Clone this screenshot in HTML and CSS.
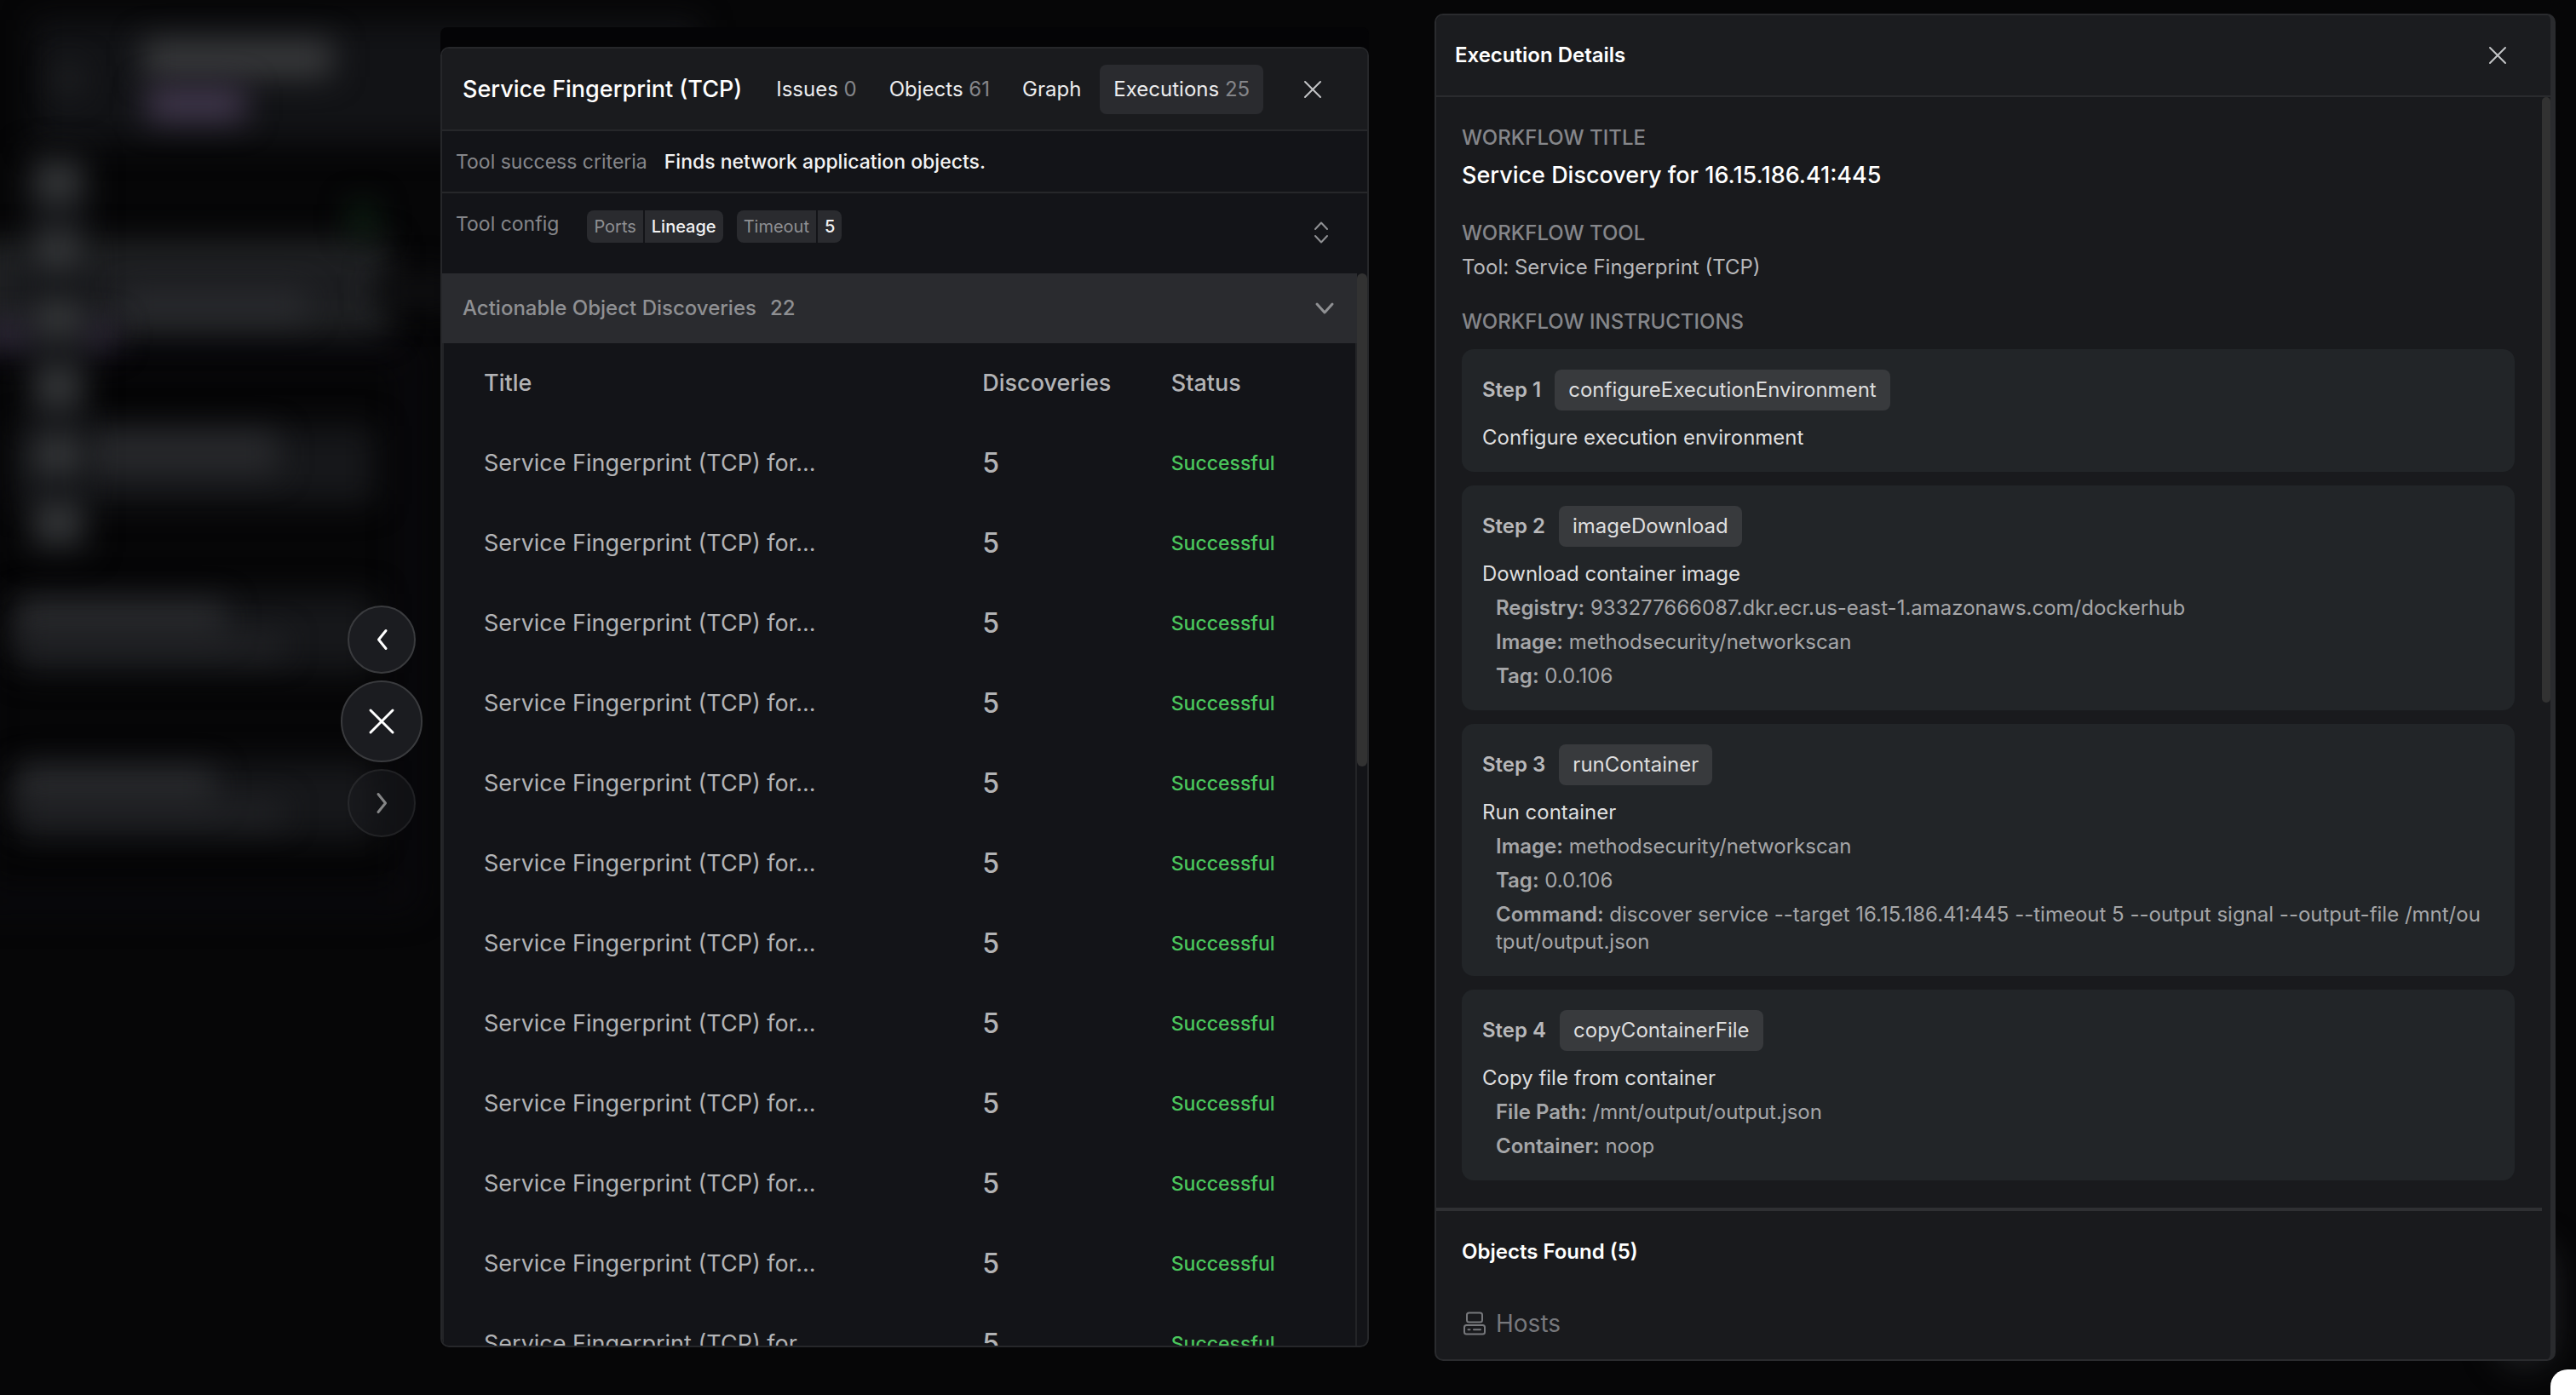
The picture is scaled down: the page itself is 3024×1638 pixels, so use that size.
FILE: index.html
```html
<!DOCTYPE html>
<html lang="en">
<head>
<meta charset="utf-8">
<meta name="viewport" content="width=device-width, initial-scale=1">
<title>Service Fingerprint (TCP)</title>
<link rel="stylesheet" href="styles.css">
</head>
<body>
<div class="backdrop" aria-hidden="true">
  <div class="region"></div>
  <div class="blob topbar"></div>
  <div class="blob topbar-title"></div>
  <div class="blob topbar-tag"></div>
  <div class="blob topbar-back"></div>
  <div class="blob node node-a"></div>
  <div class="blob node-a-text"></div>
  <div class="blob node-a-link"></div>
  <div class="blob node-a-dot"></div>
  <div class="blob node-a-tag"></div>
  <div class="blob node node-b"></div>
  <div class="blob node-b-text"></div>
  <div class="blob node node-c"></div>
  <div class="blob node-c-text"></div>
  <div class="blob node-c-sub"></div>
  <div class="blob node node-d"></div>
  <div class="blob node-d-text"></div>
  <div class="blob node-d-sub"></div>
  <div class="rail"><i></i><i></i><i></i><i></i><i></i><i></i></div>
  <div class="glow"></div>
</div>

<main class="stage">
  <nav class="pager" aria-label="Dialog navigation">
    <button class="round" type="button" aria-label="Previous"><svg width="32" height="32" viewBox="0 0 32 32"><path d="M21 5.500 12.500 16 21 26.500"/></svg></button>
    <button class="round round-lg" type="button" aria-label="Close dialog"><svg width="32" height="32" viewBox="0 0 32 32"><path d="M3 3 29 29M29 3 3 29"/></svg></button>
    <button class="round" type="button" aria-label="Next" disabled><svg width="32" height="32" viewBox="0 0 32 32"><path d="M12 5.500 20.500 16 12 26.500"/></svg></button>
  </nav>

  <div class="tool-stack">
  <section class="panel tool">
    <header class="tool-head">
      <h1 class="tool-title">Service Fingerprint (TCP)</h1>
      <div class="tabs">
        <button class="tab" type="button">Issues <span>0</span></button>
        <button class="tab" type="button">Objects <span>61</span></button>
        <button class="tab" type="button">Graph</button>
        <button class="tab active" type="button">Executions <span>25</span></button>
      </div>
      <button class="icon-btn tool-close" type="button" aria-label="Close"><svg width="24" height="24" viewBox="0 0 24 24"><path d="M3 3 21 21M21 3 3 21"/></svg></button>
    </header>
    <div class="criteria"><span class="muted">Tool success criteria</span><span class="strong">Finds network application objects.</span></div>
    <div class="config">
      <span class="muted">Tool config</span>
      <div class="chips">
        <div class="chip"><span>Ports</span><b>Lineage</b></div>
        <div class="chip"><span>Timeout</span><b>5</b></div>
      </div>
      <button class="icon-btn dim" type="button" aria-label="Expand config"><svg width="24" height="28" viewBox="0 0 24 28"><path d="M5 10 12 2.500 19 10M5 18 12 25.500 19 18"/></svg></button>
    </div>
    <div class="scroller">
      <div class="scroll-body">
        <button class="accordion" type="button"><span>Actionable Object Discoveries</span><span class="count">22</span><svg class="caret" width="24" height="24" viewBox="0 0 24 24"><path d="M3 7 12 17 21 7"/></svg></button>
        <table class="runs">
          <thead><tr><th class="c-title">Title</th><th class="c-disc">Discoveries</th><th>Status</th></tr></thead>
          <tbody>
            <tr><td>Service Fingerprint (TCP) for...</td><td class="num">5</td><td class="ok">Successful</td></tr>
            <tr><td>Service Fingerprint (TCP) for...</td><td class="num">5</td><td class="ok">Successful</td></tr>
            <tr><td>Service Fingerprint (TCP) for...</td><td class="num">5</td><td class="ok">Successful</td></tr>
            <tr><td>Service Fingerprint (TCP) for...</td><td class="num">5</td><td class="ok">Successful</td></tr>
            <tr><td>Service Fingerprint (TCP) for...</td><td class="num">5</td><td class="ok">Successful</td></tr>
            <tr><td>Service Fingerprint (TCP) for...</td><td class="num">5</td><td class="ok">Successful</td></tr>
            <tr><td>Service Fingerprint (TCP) for...</td><td class="num">5</td><td class="ok">Successful</td></tr>
            <tr><td>Service Fingerprint (TCP) for...</td><td class="num">5</td><td class="ok">Successful</td></tr>
            <tr><td>Service Fingerprint (TCP) for...</td><td class="num">5</td><td class="ok">Successful</td></tr>
            <tr><td>Service Fingerprint (TCP) for...</td><td class="num">5</td><td class="ok">Successful</td></tr>
            <tr><td>Service Fingerprint (TCP) for...</td><td class="num">5</td><td class="ok">Successful</td></tr>
            <tr><td>Service Fingerprint (TCP) for...</td><td class="num">5</td><td class="ok">Successful</td></tr>
          </tbody>
        </table>
      </div>
      <div class="track"><div class="thumb thumb-runs"></div></div>
    </div>
  </section>
  </div>

  <section class="panel details">
    <header class="details-head">
      <h2>Execution Details</h2>
      <button class="icon-btn" type="button" aria-label="Close details"><svg width="24" height="24" viewBox="0 0 24 24"><path d="M3 3 21 21M21 3 3 21"/></svg></button>
    </header>
    <div class="scroller">
      <div class="scroll-body">
        <div class="workflow">
          <div class="field">
            <h3>WORKFLOW TITLE</h3>
            <p class="wf-title">Service Discovery for 16.15.186.41:445</p>
          </div>
          <div class="field">
            <h3>WORKFLOW TOOL</h3>
            <p class="wf-tool">Tool: Service Fingerprint (TCP)</p>
          </div>
          <div class="field steps">
            <h3>WORKFLOW INSTRUCTIONS</h3>
            <article class="step">
              <div class="step-head"><span>Step 1</span><code>configureExecutionEnvironment</code></div>
              <p class="desc">Configure execution environment</p>
            </article>
            <article class="step">
              <div class="step-head"><span>Step 2</span><code>imageDownload</code></div>
              <p class="desc">Download container image</p>
              <p class="param"><b>Registry:</b> 933277666087.dkr.ecr.us-east-1.amazonaws.com/dockerhub</p>
              <p class="param"><b>Image:</b> methodsecurity/networkscan</p>
              <p class="param"><b>Tag:</b> 0.0.106</p>
            </article>
            <article class="step">
              <div class="step-head"><span>Step 3</span><code>runContainer</code></div>
              <p class="desc">Run container</p>
              <p class="param"><b>Image:</b> methodsecurity/networkscan</p>
              <p class="param"><b>Tag:</b> 0.0.106</p>
              <p class="param cmd"><b>Command:</b> discover service --target 16.15.186.41:445 --timeout 5 --output signal --output-file /mnt/output/output.json</p>
            </article>
            <article class="step">
              <div class="step-head"><span>Step 4</span><code>copyContainerFile</code></div>
              <p class="desc">Copy file from container</p>
              <p class="param"><b>File Path:</b> /mnt/output/output.json</p>
              <p class="param"><b>Container:</b> noop</p>
            </article>
          </div>
        </div>
        <div class="found">
          <h3 class="found-title">Objects Found (5)</h3>
          <div class="hosts"><svg width="28" height="28" viewBox="0 0 28 28"><rect x="6" y="1.500" width="18" height="11" rx="2.500"/><rect x="3" y="16" width="24" height="10.500" rx="2.500"/><path d="M7.500 21.250h2M14 21.250h8"/></svg><span>Hosts</span></div>
        </div>
      </div>
      <div class="track"><div class="thumb thumb-details"></div></div>
    </div>
  </section>
</main>
<div class="corner" aria-hidden="true"></div>
</body>
</html>
```
FILE: styles.css
```css
* { box-sizing: border-box; }
body {
  margin: 0;
  height: 100vh;
  overflow: hidden;
  background: #060607;
  color: #fff;
  font-family: Inter, "Liberation Sans", sans-serif;
  font-size: 24px;
  line-height: 32px;
}
h1, h2, h3, p { margin: 0; font: inherit; }
button { margin: 0; padding: 0; border: 0; background: none; color: inherit; font: inherit; }
svg { display: block; fill: none; stroke: currentColor; stroke-width: 2; stroke-linecap: round; stroke-linejoin: round; }

/* blurred canvas behind the dialogs */
.backdrop { position: absolute; inset: 0; overflow: hidden; }
.blob, .region, .rail, .glow { position: absolute; filter: blur(18px); }
.region { left: -40px; top: 400px; width: 532px; height: 670px; border: 20px solid #0a090e; border-radius: 20px; }
.topbar { left: 40px; top: 24px; width: 780px; height: 144px; background: #121316; }
.topbar-title { left: 168px; top: 48px; width: 222px; height: 42px; background: #3a3b3d; }
.topbar-tag { left: 172px; top: 102px; width: 116px; height: 40px; background: #42384e; }
.topbar-back { left: 66px; top: 76px; width: 30px; height: 34px; background: #202123; }
.node { left: 20px; width: 420px; height: 92px; background: #16171a; }
.node-a { left: -30px; top: 284px; width: 486px; height: 108px; border: 24px solid #242628; background: #1b1c1f; }
.node-a-text { left: 144px; top: 342px; width: 216px; height: 32px; background: #2a2b2f; }
.node-a-link { left: 440px; top: 320px; width: 100px; height: 44px; background: #0e0e10; }
.node-a-dot { left: 412px; top: 240px; width: 28px; height: 36px; background: #0e2615; }
.node-a-tag { left: -20px; top: 380px; width: 156px; height: 28px; background: #332b3f; }
.node-b { top: 500px; }
.node-b-text { left: 100px; top: 508px; width: 226px; height: 48px; background: #28292c; }
.node-c { top: 698px; }
.node-c-text { left: 20px; top: 708px; width: 244px; height: 40px; background: #2a2b2e; }
.node-c-sub { left: 20px; top: 746px; width: 314px; height: 24px; background: #222326; }
.node-d { top: 894px; }
.node-d-text { left: 20px; top: 904px; width: 232px; height: 40px; background: #2a2b2e; }
.node-d-sub { left: 20px; top: 942px; width: 314px; height: 24px; background: #222326; }
.rail { left: 32px; top: 180px; width: 72px; padding: 12px 10px; display: flex; flex-direction: column; gap: 36px; background: #131417; }
.rail i { height: 44px; background: #37393b; }
.glow { right: 24px; bottom: 32px; width: 72px; height: 150px; border-radius: 36px; background: #1e1f22; }

/* page grid: pager, tool dialog, gutter, details, margin */
.stage {
  position: relative;
  display: grid;
  grid-template-columns: 517fr 1090fr 77fr 1316fr 24fr;
  grid-template-rows: 100vh;
}
.pager {
  display: flex;
  flex-direction: column;
  align-items: center;
  justify-content: center;
  justify-self: end;
  gap: 8px;
  width: 96px;
  margin-right: 21px;
  padding-top: 56px;
}
.round {
  display: grid;
  place-items: center;
  width: 80px;
  height: 80px;
  border: 2px solid #3a3b3e;
  border-radius: 50%;
  background: #1b1c20;
}
.round svg { stroke-width: 3; }
.round-lg { width: 96px; height: 96px; }
.round:disabled { opacity: .5; }

.tool-stack { margin: 32px 0 56px; padding-top: 23px; border-radius: 8px; background: #040406; min-height: 0; }
.panel { display: flex; flex-direction: column; overflow: hidden; border: 2px solid #26272a; border-radius: 10px; }
.tool { height: 100%; background: #131418; font-size: 23px; }
.tool-head { display: flex; align-items: center; height: 97px; flex: none; padding: 0 52px 0 24px; border-bottom: 2px solid #26272a; background: #1a1b1e; }
.tool-title { font-size: 27px; font-weight: 500; white-space: nowrap; }
.tabs { display: flex; gap: 6px; margin-left: 24px; font-size: 24px; }
.tab { height: 58px; padding: 0 16px; border-radius: 8px; color: #ececed; white-space: nowrap; }
.tab span { color: #85868a; }
.tab.active { background: #2a2b2f; }
.icon-btn { color: #c4c5c7; }
.tool-close { margin-left: auto; }
.dim { color: #8f9093; }
.muted { color: #85868a; }
.criteria { display: flex; align-items: center; gap: 20px; height: 73px; flex: none; padding: 0 16px; border-bottom: 2px solid #26272a; }
.strong { font-weight: 500; color: #f2f2f3; }
.config { display: flex; align-items: flex-start; height: 94px; flex: none; padding: 20px 42px 0 16px; }
.config .icon-btn { margin: 12px 0 0 auto; }
.chips { display: flex; gap: 16px; margin-left: 33px; font-size: 20px; }
.chip { display: flex; gap: 2px; line-height: 38px; }
.chip span, .chip b { padding: 0 8px; background: #2a2b2f; }
.chip span { color: #8f9093; border-radius: 8px 0 0 8px; }
.chip b { font-weight: 500; color: #f2f2f3; border-radius: 0 8px 8px 0; }
.scroller { display: flex; flex: 1; min-height: 0; }
.scroll-body { flex: 1; min-width: 0; overflow: hidden; }
.track { flex: none; width: 12px; }
.details .track { width: 10px; }
.thumb { width: 100%; border-radius: 6px; background: #323232; }
.thumb-runs { height: 46%; }
.accordion { display: flex; align-items: center; gap: 16px; width: 100%; height: 82px; padding: 0 26px 0 24px; background: #2a2b2f; color: #8f9093; font-size: 24px; font-weight: 500; }
.caret { margin-left: auto; stroke-width: 3; }
.runs { width: 100%; table-layout: fixed; border-collapse: separate; border-spacing: 0; border: 2px solid #232427; border-top: 0; color: #b2b3b5; font-size: 27px; }
.runs th, .runs td { height: 94px; padding: 0 0 0 47px; text-align: left; font-weight: 400; white-space: nowrap; }
.runs th { font-weight: 500; }
.runs .c-title { width: 54.7%; }
.runs .c-disc { width: 20.7%; }
.runs .num { font-size: 32px; font-weight: 500; }
.runs .ok { font-size: 23px; font-weight: 500; color: #4bc75c; }

.details { grid-column: 4; margin: 16px 0 40px; border-right-width: 6px; border-color: #2a2b2e; background: #191a1d; }
.details-head { display: flex; align-items: center; justify-content: space-between; height: 96px; flex: none; padding: 0 50px 0 22px; border-bottom: 2px solid #2a2b2e; background: #1b1c1f; font-weight: 600; }
.workflow { display: flex; flex-direction: column; gap: 32px; padding: 32px 32px 32px 30px; }
.field { display: flex; flex-direction: column; gap: 8px; }
.field h3 { font-weight: 500; color: #85868a; }
.wf-title { font-size: 27px; line-height: 40px; font-weight: 500; }
.wf-tool { color: #b8b8ba; }
.field.steps { gap: 16px; }
.step { display: flex; flex-direction: column; gap: 8px; padding: 24px; border-radius: 14px; background: #222528; }
.step-head { display: flex; align-items: center; gap: 16px; margin-bottom: 8px; color: #b8b8ba; font-weight: 600; }
.step-head code { padding: 8px 16px; border-radius: 8px; background: #383a3d; color: #dededf; font-family: inherit; font-weight: 400; }
.desc { color: #dededf; }
.param { padding-left: 16px; color: #a5a6a8; }
.param b { font-weight: 600; }
.cmd { padding-right: 12px; word-break: break-all; }
.found { padding: 32px 30px; border-top: 4px solid #2f3033; }
.found-title { font-weight: 600; }
.hosts { display: flex; align-items: center; gap: 12px; margin-top: 52px; color: #77787c; font-size: 28px; }
.thumb-details { height: 48%; }

.corner { position: absolute; right: 0; bottom: 0; width: 30px; height: 30px; border-top-left-radius: 20px; background: #fff; }
```
